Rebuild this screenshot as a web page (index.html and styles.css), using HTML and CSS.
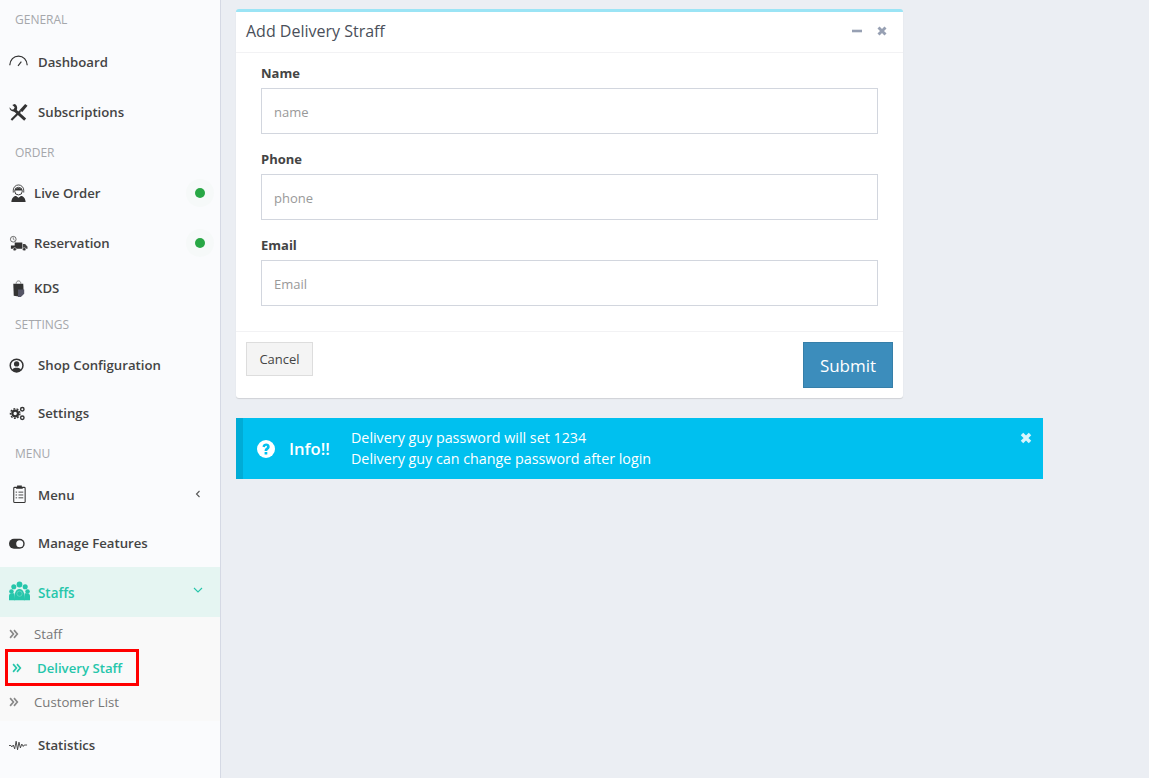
FILE: index.html
```html
<!DOCTYPE html>
<html lang="en">
<head>
<meta charset="utf-8">
<title>Add Delivery Staff</title>
<link rel="stylesheet" href="styles.css">
</head>
<body>
<aside class="sidebar">
  <div class="label label-general">GENERAL</div>
  <a class="item"><svg class="icon" viewBox="0 0 20 20"><path d="M.8 13C1 7 5 3.200 10 3.200S19 7 19.200 13" fill="none" stroke="#333" stroke-width="1.300"/><path d="M9.500 13.500l3.500-4.500" stroke="#333" stroke-width="1.200"/></svg><span>Dashboard</span></a>
  <a class="item item-gap"><svg class="icon" viewBox="0 0 20 20"><path d="M2.500 18L12 8.500" stroke="#333" stroke-width="2.300"/><path d="M11 7.500l6-6.500 2.500 2-5.500 6.500z" fill="#333"/><path d="M6 7.500L17 17.500" stroke="#333" stroke-width="3"/><path d="M.5 4.500L3 7l2-.5 1-2L3.500 2 6 1c2 .8 3 3 2.500 5.500L7 9C3.500 9.500 .5 8 .5 4.500z" fill="#333"/></svg><span>Subscriptions</span></a>
  <div class="label label-order">ORDER</div>
  <a class="item tight"><svg class="icon" viewBox="0 0 20 20"><path d="M4.500 9V6.500a5.500 5.500 0 0 1 11 0V9" fill="none" stroke="#444" stroke-width="1"/><circle cx="10" cy="7.500" r="4" fill="#fafbfd" stroke="#333"/><path d="M6 6.500c1-3 7-3 8 0-3 .5-6 .5-8 0z" fill="#333"/><path d="M2.500 19c0-4.500 3-6.500 5-6.500l2.500 2 2.500-2c2 0 5 2 5 6.500z" fill="#333"/></svg><span>Live Order</span><i class="dot-wrap"><b class="dot"></b></i></a>
  <a class="item tight item-gap"><svg class="icon" viewBox="0 0 20 20"><circle cx="4.500" cy="5.500" r="3" fill="#fafbfd" stroke="#666"/><path d="M4.500 3.500v2l1.500 1" fill="none" stroke="#666" stroke-width=".8"/><path d="M6 9h8v6.500H2V12h4z" fill="#333"/><path d="M14.500 10.500h2.500l2.500 3v2h-5z" fill="#444"/><circle cx="6" cy="16" r="1.700" fill="#333" stroke="#fafbfd" stroke-width=".5"/><circle cx="16" cy="16" r="1.700" fill="#333" stroke="#fafbfd" stroke-width=".5"/></svg><span>Reservation</span><i class="dot-wrap"><b class="dot"></b></i></a>
  <a class="item tight item-kds"><svg class="icon" viewBox="0 0 20 20"><path d="M4.500 5h10.500l.5 10-5.500 3.500-5-1z" fill="#333"/><path d="M7.500 5c0-4 5-4 5 0" fill="none" stroke="#777" stroke-width="1"/><path d="M9.500 11h6.500v4.500l-3.500 3.500h-3z" fill="#556"/></svg><span>KDS</span></a>
  <div class="label label-settings">SETTINGS</div>
  <a class="item item-first"><svg class="icon" viewBox="0 0 20 20"><circle cx="8" cy="10" r="6.700" fill="none" stroke="#333" stroke-width="1.600"/><circle cx="8" cy="8.300" r="2.800" fill="#333"/><path d="M3.500 14.500c1-2.700 8-2.700 9 0l-2 2h-5z" fill="#333"/></svg><span>Shop Configuration</span></a>
  <a class="item"><svg class="icon" viewBox="0 0 20 20"><circle cx="6.500" cy="10" r="3" fill="none" stroke="#333" stroke-width="2.400"/><circle cx="6.500" cy="10" r="5" fill="none" stroke="#333" stroke-width="1.400" stroke-dasharray="2 1.500"/><circle cx="14" cy="5.500" r="1.800" fill="none" stroke="#333" stroke-width="1.500"/><circle cx="14" cy="14.500" r="1.800" fill="none" stroke="#333" stroke-width="1.500"/></svg><span>Settings</span></a>
  <div class="label label-menu">MENU</div>
  <a class="item item-first"><svg class="icon icon-menu" viewBox="0 0 20 20"><rect x="5" y="2.500" width="12" height="16" rx="1" fill="none" stroke="#333" stroke-width="1.100"/><path d="M8.500 2.500V.5h5v2h1V4h-7V2.500z" fill="#333"/><path d="M7 7.500h1.500M10 7.500h5M7 10.500h1.500M10 10.500h5M7 13.500h1.500M10 13.500h5" stroke="#444"/></svg><span>Menu</span><svg class="chev" viewBox="0 0 10 10"><path d="M6.500 2L3.500 5l3 3" fill="none" stroke="#555" stroke-width="1.100"/></svg></a>
  <a class="item"><svg class="icon" viewBox="0 0 20 20"><rect x="0" y="5" width="16.500" height="10.500" rx="5.200" fill="#333"/><circle cx="11.300" cy="10.200" r="3.700" fill="#fafbfd"/></svg><span>Manage Features</span></a>
  <a class="item item-active"><svg class="icon" viewBox="0 0 24 24"><g fill="#26c6ab"><circle cx="12" cy="4" r="3.300"/><circle cx="5.500" cy="6.500" r="2.900"/><circle cx="18.500" cy="6.500" r="2.900"/><circle cx="2.800" cy="12" r="2.600"/><circle cx="21.200" cy="12" r="2.600"/><path d="M0 22v-5c0-2 1.500-3 3-3h3l1 8zM24 22v-5c0-2-1.500-3-3-3h-3l-1 8z"/><path d="M6 22c0-7 1-13 6-13s6 6 6 13z"/></g><circle cx="12" cy="14.500" r="3" fill="none" stroke="#7fdccb" stroke-width=".7"/></svg><span>Staffs</span><svg class="chev chev-open" viewBox="0 0 10 10"><path d="M1 3l4 4 4-4" fill="none" stroke="#26c6ab" stroke-width="1.100"/></svg></a>
  <div class="submenu">
    <a class="subitem"><svg class="arrows" viewBox="0 0 9 9"><path d="M1 1l3 3.500-3 3.500M4.500 1l3 3.500-3 3.500" fill="none" stroke="#888" stroke-width="1.500"/></svg><span>Staff</span></a>
    <a class="subitem subitem-active"><svg class="arrows" viewBox="0 0 9 9"><path d="M1 1l3 3.500-3 3.500M4.500 1l3 3.500-3 3.500" fill="none" stroke="#26c6ab" stroke-width="1.500"/></svg><span>Delivery Staff</span></a>
    <a class="subitem"><svg class="arrows" viewBox="0 0 9 9"><path d="M1 1l3 3.500-3 3.500M4.500 1l3 3.500-3 3.500" fill="none" stroke="#888" stroke-width="1.500"/></svg><span>Customer List</span></a>
  </div>
  <a class="item"><svg class="icon" viewBox="0 0 20 20"><path d="M0 10h2l1 1.500 1.500-2 1.500 4 1.500-8 1.500 9 1.500-8 1.500 6 1.500-4 1.500 2.500 1-1.500h3" fill="none" stroke="#333" stroke-width=".9"/></svg><span>Statistics</span></a>
</aside>
<main class="content">
  <section class="card">
    <header class="card-head">
      <h3>Add Delivery Straff</h3>
      <div class="tools">
        <svg class="tool" viewBox="0 0 12 12"><path d="M1 6h10" stroke="#97a0b3" stroke-width="2.600"/></svg>
        <svg class="tool" viewBox="0 0 12 12"><path d="M2.500 2.500l7 7M9.500 2.500l-7 7" stroke="#97a0b3" stroke-width="2.900"/></svg>
      </div>
    </header>
    <div class="card-body">
      <div class="field"><label>Name</label><input type="text" placeholder="name"></div>
      <div class="field"><label>Phone</label><input type="text" placeholder="phone"></div>
      <div class="field"><label>Email</label><input type="text" placeholder="Email"></div>
    </div>
    <footer class="card-foot">
      <button class="btn-cancel">Cancel</button>
      <button class="btn-submit">Submit</button>
    </footer>
  </section>
  <section class="alert">
    <svg class="alert-icon" viewBox="0 0 18 18"><circle cx="9" cy="9" r="9" fill="#fff"/><path d="M5.500 6.800C5.800 2.300 12.700 2.500 12.700 6.700c0 2.800-2.400 2.600-2.400 4.300H7.600c0-3.300 2.400-2.900 2.400-4.300 0-1.400-1.800-1.300-2.100.6z" fill="#00c0ef"/><rect x="7.600" y="12" width="2.700" height="2.500" fill="#00c0ef"/></svg>
    <strong>Info!!</strong>
    <p>Delivery guy password will set 1234<br>Delivery guy can change password after login</p>
    <svg class="alert-close" viewBox="0 0 12 12"><path d="M2 2l8 8M10 2l-8 8" stroke="#d8f5fd" stroke-width="3.500"/></svg>
  </section>
</main>
</body>
</html>
```
FILE: styles.css
```css
*, *::after { box-sizing: border-box; }
html, body { margin: 0; height: 100%; }
body {
  display: flex;
  width: 1149px;
  height: 778px;
  overflow: hidden;
  background: #ebeef3;
  font-family: "Open Sans", "Noto Sans", sans-serif;
  color: #444;
}
.sidebar {
  flex: 0 0 221px;
  height: 778px;
  background: #fafbfd;
  border-right: 1px solid #d5d9e4;
  font-size: 13.2px;
  font-weight: 600;
}
.label {
  display: flex;
  align-items: center;
  padding-left: 15px;
  font-size: 12px;
  font-weight: 400;
  color: #a5a7ab;
}
.label-general { height: 38px; }
.label-order { height: 33px; }
.label-settings { height: 31px; margin-bottom: 1px; }
.label-menu { height: 33px; margin-bottom: 1px; }
.item {
  display: flex;
  align-items: center;
  height: 48px;
  padding-left: 9px;
  color: #444;
  position: relative;
}
.item-gap { margin-top: 2px; }
.item-first { margin-top: 0; }
.item > span { margin-left: 10px; }
.item.tight > span { margin-left: 6px; }
.item-kds { height: 42px; }
.icon { width: 19px; height: 19px; flex: none; }
.icon-menu { position: relative; top: -1px; }
.dot-wrap {
  position: absolute;
  right: 6px;
  top: 50%;
  margin-top: -14px;
  width: 28px;
  height: 28px;
  border-radius: 50%;
  background: #f6f9f9;
  display: flex;
  align-items: center;
  justify-content: center;
}
.dot { width: 10px; height: 10px; border-radius: 50%; background: #28a745; }
.chev {
  width: 10px;
  height: 10px;
  position: absolute;
  right: 17px;
  top: 50%;
  margin-top: -6px;
}
.chev-open { right: 17px; margin-top: -7px; }
.item-active { height: 50px; background: #e5f5f2; color: #26c6ab; }
.item-active > span { position: relative; top: 1px; font-size: 13.4px; }
.item-active .icon { width: 21px; height: 21px; margin-top: -2px; margin-right: -2px; }
.submenu {
  height: 104px;
  background: #f9f9f9;
  font-weight: 400;
  color: #777;
}
.subitem {
  display: flex;
  align-items: center;
  height: 34px;
  padding-left: 9px;
  position: relative;
}
.arrows {
  width: 10px;
  height: 10px;
  margin-right: 15px;
  flex: none;
}
.subitem-active {
  color: #26c6ab;
  font-weight: 600;
}
.subitem-active .arrows { margin-left: 3px; }
.subitem-active::after {
  content: "";
  position: absolute;
  left: 5px;
  top: -2px;
  width: 134px;
  height: 37px;
  border: 3px solid #f00;
  pointer-events: none;
}
.content {
  flex: 1;
  padding: 9px 0 0 15px;
  display: flex;
  flex-direction: column;
  align-items: flex-start;
  gap: 20px;
}
.card {
  width: 667px;
  height: 389px;
  background: #fff;
  border-top: 3px solid #9be4f5;
  border-radius: 3px;
  box-shadow: 0 1px 1px rgba(0,0,0,.12);
}
.card-head {
  height: 41px;
  display: flex;
  align-items: center;
  justify-content: space-between;
  padding: 0 15px 2px 10px;
  border-bottom: 1px solid #f2f2f4;
}
.card-head h3 { margin: 0; font-size: 16px; font-weight: 400; color: #4a4f5a; }
.tools { display: flex; gap: 13px; }
.tool { width: 12px; height: 12px; }
.card-body { height: 279px; padding: 10px 25px 0; border-bottom: 1px solid #f2f2f4; }
.field { height: 86px; }
.field label {
  display: block;
  height: 25px;
  line-height: 20px;
  font-size: 13px;
  font-weight: 700;
  color: #444;
}
.field input {
  display: block;
  width: 100%;
  height: 46px;
  padding: 2px 12px 0;
  border: 1px solid #d2d6de;
  font: 400 13px "Open Sans", "Noto Sans", sans-serif;
  background: #fff;
  outline: none;
}
.field input::placeholder { color: #999; opacity: 1; }
.card-foot {
  display: flex;
  justify-content: space-between;
  align-items: flex-start;
  padding: 10px 10px 0;
}
.btn-cancel {
  width: 67px;
  height: 34px;
  border: 1px solid #ddd;
  background: #f4f4f4;
  color: #444;
  font: 400 13px "Open Sans", "Noto Sans", sans-serif;
}
.btn-submit {
  width: 90px;
  height: 46px;
  border: 1px solid #367fa9;
  background: #3c8dbc;
  color: #fff;
  font: 400 17px "Open Sans", "Noto Sans", sans-serif;
}
.alert {
  width: 807px;
  height: 61px;
  background: #00c0ef;
  border-left: 7px solid #00acd6;
  color: #fff;
  display: flex;
  align-items: center;
  position: relative;
}
.alert-icon { width: 18px; height: 18px; margin-left: 14px; flex: none; }
.alert strong { margin-left: 14px; font-size: 16.6px; font-weight: 600; width: 62px; }
.alert p { margin: -2px 0 0; font-size: 14.3px; line-height: 21px; }
.alert-close {
  position: absolute;
  right: 11px;
  top: 14px;
  width: 12px;
  height: 12px;
}
```
